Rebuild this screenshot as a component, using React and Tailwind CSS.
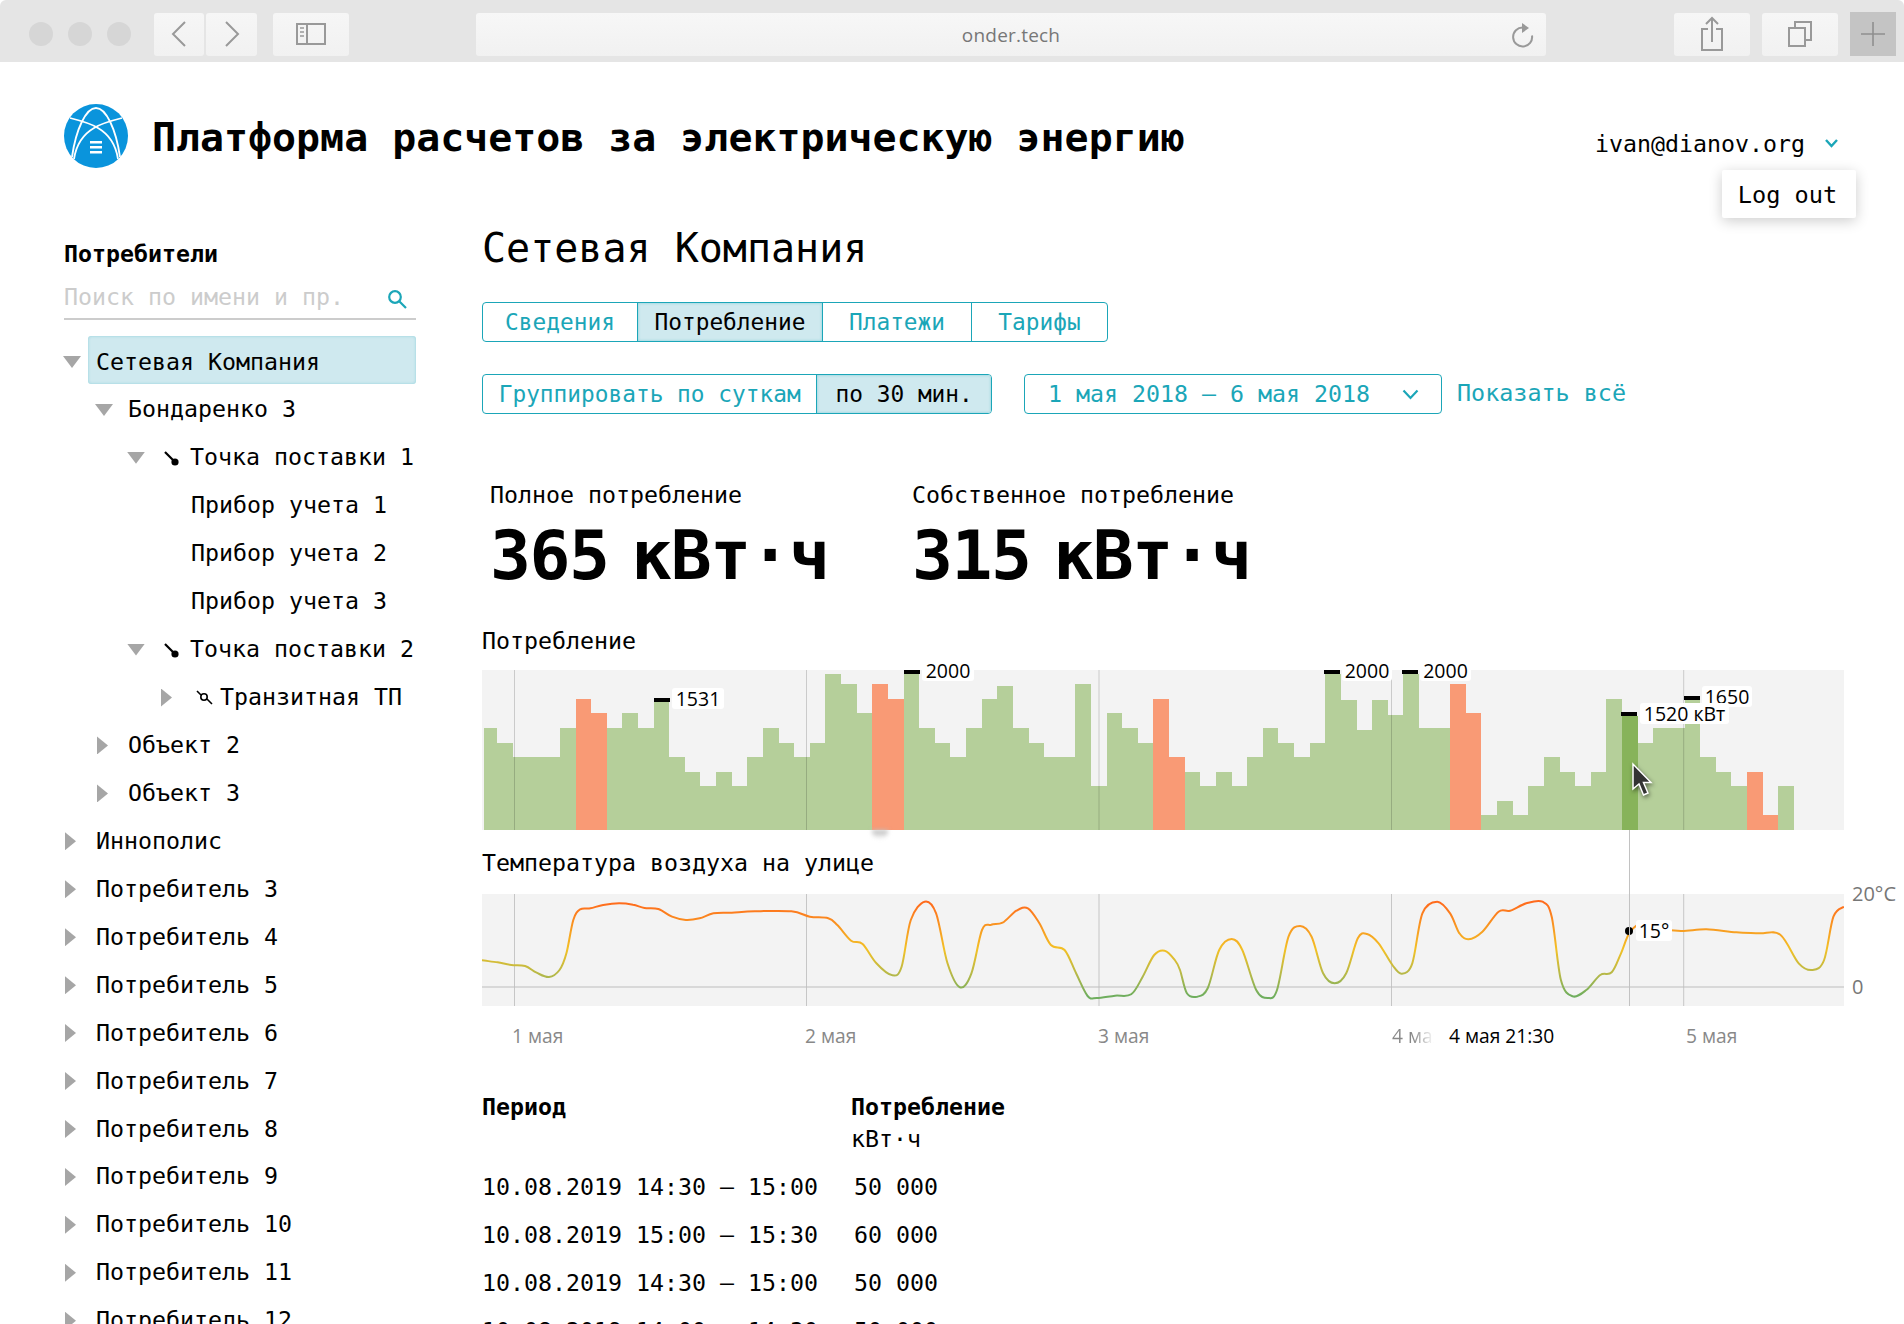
import React from 'react';

const BAR_TOPS = [
  234, 278, 321, 321, 321, 234, 147, 190, 234, 190, 234, 154, 321, 365, 408, 365, 408, 321, 234, 278, 321, 278,
  72, 103, 190, 103, 147, 72, 234, 278, 321, 234, 147, 108, 234, 278, 321, 321, 103, 408, 190, 234, 278, 147, 321,
  365, 408, 365, 408, 321, 234, 278, 321, 278, 72, 151, 239, 151, 195, 72, 234, 234, 103, 190, 495, 453, 495, 408,
  321, 365, 408, 365, 147, 197, 278, 234, 234, 150, 321, 365, 408, 365, 495, 408,
];
const ORANGE = [6, 7, 25, 26, 43, 44, 62, 63, 81, 82];
const SELECTED = 73;
const GRID_X = [32.5, 324.5, 617, 909.5, 1201.7];

const MARKERS = [
  { x: 172, y: 28, text: '1531', lx: 190, ly: 18, w: 52 },
  { x: 422, y: 0, text: '2000', lx: 440, ly: -10, w: 52 },
  { x: 842, y: 0, text: '2000', lx: 860, ly: -10, w: 50 },
  { x: 920, y: 0, text: '2000', lx: 938, ly: -10, w: 51 },
  { x: 1202, y: 26, text: '1650', lx: 1220, ly: 16, w: 50 },
  { x: 1139, y: 42, text: '1520 кВт', lx: 1158, ly: 33, w: 89 },
];

const A = [[26,331],[60,337],[90,345],[120,348],[145,368],[172,381],[195,360],[210,310],[225,210],[240,178],[262,175],[290,165],[325,160],[355,164],[380,174],[410,177],[440,200],[470,210],[500,205],[530,190],[570,188],[620,184],[700,184],[740,200],[780,205],[800,225],[830,272],[855,282],[885,340],[920,376],[940,350],[960,210],[990,155],[1015,190],[1040,340],[1067,412],[1092,370],[1115,240],[1135,224],[1160,218],[1190,182],[1215,175],[1240,220],[1265,285],[1295,300],[1320,370],[1345,438],[1365,444],[1405,437],[1440,433],[1465,380],[1490,315],[1513,302],[1535,330]];
const B = [[0,360],[15,430],[37,440],[60,415],[85,300],[112,267],[135,300],[165,420],[190,444],[210,420],[235,260],[260,228],[285,260],[310,370],[335,400],[360,370],[385,265],[405,252],[430,280],[460,345],[480,371],[503,340],[525,190],[557,155],[585,190],[605,250],[625,268],[655,245],[690,185],[715,182],[750,160],[785,155],[805,200],[825,390],[850,439],[880,420],[910,375],[935,367],[955,310],[975,245],[1005,218],[1040,235],[1085,243],[1140,238],[1205,247],[1255,250],[1300,254],[1340,340],[1370,360],[1395,330],[1415,200],[1438,170]];

// coordinates were read off the crops, so convert to chart px
const tempPoints = [
  ...A.map(([x, y]) => [470 + x / 2.1778 - 482, 850 + y / 3 - 894]),
  ...B.map(([x, y]) => [1180 + x / 2.1657 - 482, 850 + y / 3 - 894]),
];

function smooth(pts) {
  let d = `M${pts[0][0].toFixed(1)} ${pts[0][1].toFixed(1)}`;
  for (let i = 0; i < pts.length - 1; i++) {
    const p0 = pts[i - 1] || pts[i];
    const p1 = pts[i];
    const p2 = pts[i + 1];
    const p3 = pts[i + 2] || p2;
    const c1x = p1[0] + (p2[0] - p0[0]) / 6;
    const c1y = p1[1] + (p2[1] - p0[1]) / 6;
    const c2x = p2[0] - (p3[0] - p1[0]) / 6;
    const c2y = p2[1] - (p3[1] - p1[1]) / 6;
    d += `C${c1x.toFixed(1)} ${c1y.toFixed(1)} ${c2x.toFixed(1)} ${c2y.toFixed(1)} ${p2[0].toFixed(1)} ${p2[1].toFixed(1)}`;
  }
  return d;
}

const TREE = [
  { level: 0, open: true, text: 'Сетевая Компания', active: true },
  { level: 1, open: true, text: 'Бондаренко 3' },
  { level: 2, open: true, icon: 'point', text: 'Точка поставки 1' },
  { level: 3, text: 'Прибор учета 1' },
  { level: 3, text: 'Прибор учета 2' },
  { level: 3, text: 'Прибор учета 3' },
  { level: 2, open: true, icon: 'point', text: 'Точка поставки 2' },
  { level: 4, closed: true, icon: 'transit', text: 'Транзитная ТП' },
  { level: 1, closed: true, text: 'Объект 2' },
  { level: 1, closed: true, text: 'Объект 3' },
  { level: 0, closed: true, text: 'Иннополис' },
  ...[3, 4, 5, 6, 7, 8, 9, 10, 11, 12].map(n => ({ level: 0, closed: true, text: `Потребитель ${n}` })),
];

const ROWS = [
  ['10.08.2019 14:30 — 15:00', '50 000'],
  ['10.08.2019 15:00 — 15:30', '60 000'],
  ['10.08.2019 14:30 — 15:00', '50 000'],
  ['10.08.2019 14:00 — 14:30', '50 000'],
];

function ToolBtn({ className, children }) {
  return (
    <div className={`h-[43px] rounded-[3px] bg-gradient-to-b from-[#f6f6f6] to-[#f1f1f1] flex items-center justify-center ${className}`}>
      {children}
    </div>
  );
}

function BrowserBar() {
  return (
    <div className="h-[62px] pt-[6px] bg-[#e5e5e5] rounded-t-[6px] flex items-center relative font-['Open_Sans',sans-serif]">
      <div className="flex gap-[15px] ml-[29px] w-[125px]">
        <div className="w-6 h-6 rounded-full bg-[#d6d6d6]" />
        <div className="w-6 h-6 rounded-full bg-[#d6d6d6]" />
        <div className="w-6 h-6 rounded-full bg-[#d6d6d6]" />
      </div>
      <ToolBtn className="w-[50px]">
        <svg width="16" height="28" viewBox="0 0 16 28" fill="none" stroke="#999" strokeWidth="2"><path d="M14 2 2 14l12 12" /></svg>
      </ToolBtn>
      <ToolBtn className="w-[51px] ml-[2px]">
        <svg width="16" height="28" viewBox="0 0 16 28" fill="none" stroke="#999" strokeWidth="2"><path d="m2 2 12 12L2 26" /></svg>
      </ToolBtn>
      <ToolBtn className="w-[76px] ml-4">
        <svg width="30" height="22" viewBox="0 0 30 22" fill="none" stroke="#999" strokeWidth="2"><rect x="1" y="1" width="28" height="20" /><path d="M11 1v20" /><path d="M4 5h4M4 9h4M4 13h4" strokeWidth="1.6" /></svg>
      </ToolBtn>
      <div className="w-[1070px] h-[43px] ml-[127px] rounded-[3px] bg-gradient-to-b from-[#f7f7f7] to-[#f1f1f1] relative flex items-center justify-center">
        <span className="text-[19px] text-[#777] mt-[3px] tracking-[0.2px]">onder.tech</span>
        <svg className="absolute right-[12px] top-[9px]" width="24" height="26" viewBox="0 0 24 26" fill="none" stroke="#999" strokeWidth="2">
          <path d="M13 5.500a9.500 9.500 0 1 0 9 8" />
          <path d="m12 1 7 5-7 5z" fill="#999" stroke="none" />
        </svg>
      </div>
      <ToolBtn className="w-[76px] ml-[128px]">
        <svg width="22" height="36" viewBox="0 0 22 36" fill="none" stroke="#999" strokeWidth="2"><path d="M7 13H1v21h20V13h-6" /><path d="M11 26V2M5 8l6-6 6 6" /></svg>
      </ToolBtn>
      <ToolBtn className="w-[76px] ml-3">
        <svg width="24" height="28" viewBox="0 0 24 28" fill="none" stroke="#999" strokeWidth="2"><rect x="1" y="8" width="16" height="18" /><path d="M7 8V2h16v18h-6" /></svg>
      </ToolBtn>
      <div className="w-[46px] h-[44px] ml-3 bg-[#c4c4c4] flex items-center justify-center">
        <svg width="24" height="24" viewBox="0 0 24 24" stroke="#8f8f8f" strokeWidth="1.6"><path d="M0 12h24M12 0v24" /></svg>
      </div>
    </div>
  );
}

function Logo() {
  return (
    <svg width="64" height="64" viewBox="0 0 64 64" fill="none" className="shrink-0">
      <circle cx="32" cy="32" r="32" fill="#0a94dc" />
      <g stroke="#fff" strokeWidth="1.8">
        <path d="M8 53C12 25 22 4 32 4s20 21 24 49" />
        <path d="M6 14c12 3 22 6 28 10 12 7 18 18 20 31" />
        <path d="M58 14c-12 3-22 6-28 10-12 7-18 18-20 31" />
      </g>
      <path d="M26 37h12v2.600H26zM26 42h12v2.600H26zM26 47h12v2.600H26z" fill="#fff" />
    </svg>
  );
}

function Header() {
  return (
    <div className="h-[162px] pl-16 pr-[66px] pt-[42px] flex items-start relative">
      <Logo />
      <h1 className="ml-6 text-[39.9px] font-bold leading-[60px] mt-[3px] text-black whitespace-nowrap">
        Платформа расчетов за электрическую энергию
      </h1>
      <div className="ml-auto mt-[24px] flex items-center">
        <span className="leading-8">ivan@dianov.org</span>
        <svg className="ml-5 mt-[-1px]" width="13" height="9" viewBox="0 0 13 9" fill="none" stroke="#1ba6b8" strokeWidth="2.4"><path d="m1 1 5.500 6L12 1" /></svg>
      </div>
      <div className="absolute left-[1722px] top-[108px] w-[134px] h-[48px] pt-[3px] pr-[3px] bg-white rounded-[2px] shadow-[0_3px_14px_rgba(0,0,0,0.2)] flex items-center justify-center text-[23.6px]">
        Log out
      </div>
    </div>
  );
}

function TreeIcon({ type }) {
  if (type === 'point') {
    return (
      <svg width="18" height="18" viewBox="0 0 18 18" className="shrink-0" stroke="#000" strokeWidth="2.2">
        <path d="M2 3 11 12" />
        <circle cx="12" cy="13" r="3.600" fill="#000" stroke="none" />
      </svg>
    );
  }
  return (
    <svg width="18" height="18" viewBox="0 0 18 18" className="shrink-0" fill="none" stroke="#000" strokeWidth="1.6">
      <path d="M1 2 5 6M11 10l5 5" />
      <circle cx="8" cy="8" r="3.200" />
    </svg>
  );
}

function TreeRow({ item }) {
  const indent = ['w-0', 'w-8', 'w-16', 'w-[127px]', 'w-[96px]'][item.level];
  return (
    <div className="h-[47.95px] flex items-center whitespace-nowrap shrink-0">
      <div className={`shrink-0 ${indent}`} />
      {item.level < 3 && (
        <div className="w-8 shrink-0 flex items-center">
          {item.open && <div className="w-[18px] h-[12px] bg-[#a6a6a6] [clip-path:polygon(0_0,100%_0,50%_100%)] -ml-[1px]" />}
          {item.closed && <div className="w-[11px] h-[18px] bg-[#a6a6a6] [clip-path:polygon(0_0,100%_50%,0_100%)] ml-[1px]" />}
        </div>
      )}
      {item.level === 4 && (
        <div className="w-[62px] shrink-0 flex items-center pl-[1px]">
          <div className="w-[11px] h-[18px] bg-[#a6a6a6] [clip-path:polygon(0_0,100%_50%,0_100%)]" />
          <div className="ml-[24px]"><TreeIcon type="transit" /></div>
        </div>
      )}
      {item.icon === 'point' && <div className="ml-[3px] mr-[9px]"><TreeIcon type="point" /></div>}
      {item.active ? (
        <div className="w-[328px] h-[48px] -ml-2 -mt-[4px] pl-2 pt-[4px] flex items-center bg-[#cfe9ef] rounded-[3px] shadow-[inset_0_0_3px_rgba(27,166,184,0.35)]">{item.text}</div>
      ) : (
        <span className={item.icon === 'transit' ? '-ml-[2px]' : ''}>{item.text}</span>
      )}
    </div>
  );
}

function Sidebar() {
  return (
    <div className="w-[352px] shrink-0 pt-[6px]">
      <div className="h-12 flex items-center font-bold">Потребители</div>
      <div className="h-[42px] pb-[2px] border-b-2 border-[#cccccc] flex items-center justify-between">
        <span className="text-[#cccccc]">Поиск по имени и пр.</span>
        <svg className="mr-[9px] mt-[3px]" width="20" height="20" viewBox="0 0 20 20" fill="none" stroke="#1ba6b8" strokeWidth="2.2"><circle cx="8" cy="8" r="5.800" /><path d="m12.500 12.500 6.500 6.500" /></svg>
      </div>
      <div className="mt-[18px] flex flex-col">
        {TREE.map((item, i) => <TreeRow key={i} item={item} />)}
      </div>
    </div>
  );
}

function Segment({ items, active, className }) {
  return (
    <div className={`h-10 flex border border-[#1ba6b8] rounded-[4px] overflow-hidden text-[22.8px] ${className}`}>
      {items.map(([label, cls], i) => (
        <div key={i} className={`flex items-center justify-center whitespace-nowrap ${cls} ${i ? 'border-l border-[#1ba6b8]' : ''} ${i === active ? 'bg-[#cfe9ef] text-black shadow-[inset_0_0_3px_rgba(27,166,184,0.4)]' : 'text-[#1ba6b8]'}`}>
          {label}
        </div>
      ))}
    </div>
  );
}

function Toolbar() {
  return (
    <>
      <Segment
        className="mt-[30px] w-[626px]"
        active={1}
        items={[['Сведения', 'w-[154px]'], ['Потребление', 'w-[185px]'], ['Платежи', 'w-[149px]'], ['Тарифы', 'w-[136px]']]}
      />
      <div className="mt-8 flex items-center">
        <Segment
          className="w-[510px]"
          active={1}
          items={[['Группировать по суткам', 'w-[334px]'], ['по 30 мин.', 'w-[175px]']]}
        />
        <div className="ml-8 w-[418px] h-10 border border-[#1ba6b8] rounded-[4px] text-[#1ba6b8] flex items-center pl-[23px] pr-[22px] justify-between whitespace-nowrap">
          <span>1 мая 2018 — 6 мая 2018</span>
          <svg width="17" height="11" viewBox="0 0 17 11" fill="none" stroke="#1ba6b8" strokeWidth="2.2"><path d="m1.500 1.500 7 7.500 7-7.500" /></svg>
        </div>
        <span className="ml-[15px] text-[#1ba6b8] text-[23.4px]">Показать всё</span>
      </div>
    </>
  );
}

function Stats() {
  return (
    <div className="mt-[64px] flex">
      <div className="w-[430px] pl-2">
        <div className="h-[34px] leading-[34px]">Полное потребление</div>
        <div className="h-[80px] leading-[80px] mt-1 text-[68px] font-bold tracking-[-1.4px] [word-spacing:-17px] whitespace-nowrap">365 кВт·ч</div>
      </div>
      <div>
        <div className="h-[34px] leading-[34px]">Собственное потребление</div>
        <div className="h-[80px] leading-[80px] mt-1 text-[68px] font-bold tracking-[-1.4px] [word-spacing:-17px] whitespace-nowrap">315 кВт·ч</div>
      </div>
    </div>
  );
}

function ChartLabel({ left, top, width, height, children }) {
  return (
    <div
      className="absolute bg-white rounded-[3px] flex items-center justify-center font-['Open_Sans',sans-serif] text-[19.5px] text-black whitespace-nowrap"
      style={{ left, top, width, height }}
    >
      {children}
    </div>
  );
}

function ConsumptionChart() {
  return (
    <div className="relative w-[1362px] h-[160px] bg-[#f3f3f3]">
      <svg width="1362" height="160" viewBox="0 0 1362 160" className="absolute inset-0">
        {BAR_TOPS.map((top, i) => {
          const y = (top - 60) / 3;
          const fill = ORANGE.includes(i) ? '#f99a75' : i === SELECTED ? '#87b35a' : '#b5cf9a';
          const x = i === 0 ? 1.8 : -0.2 + i * 15.62;
          const w = i === 0 ? 13.6 : 15.62;
          return <rect key={i} x={x} y={y} width={w} height={160 - y} fill={fill} shapeRendering="crispEdges" />;
        })}
        {GRID_X.map(x => <rect key={x} x={x - 0.5} y="0" width="1" height="160" fill="#000" opacity="0.17" />)}
      </svg>
      {MARKERS.map((m, i) => (
        <React.Fragment key={i}>
          <ChartLabel left={m.lx} top={m.ly} width={m.w} height={21}>{m.text}</ChartLabel>
          <div className="absolute w-4 h-1 bg-black" style={{ left: m.x, top: m.y }} />
        </React.Fragment>
      ))}
      <div className="absolute left-[390px] top-[160px] w-4 h-[9px] rounded-b-full blur-[2px] bg-gradient-to-b from-[#b5b5b5] to-white" />
      <svg className="absolute left-[1148px] top-[91px] drop-shadow-[1px_2px_2px_rgba(0,0,0,0.5)]" width="26" height="38" viewBox="0 0 26 38">
        <path d="M3 3v25l6-5 4.500 11 4.500-2-4.500-10.500H21z" fill="#333" stroke="#fff" strokeWidth="1.500" />
      </svg>
    </div>
  );
}

function TemperatureChart() {
  const d = smooth(tempPoints);
  return (
    <div className="relative w-[1362px] h-[112px] bg-[#f3f3f3]">
      <svg width="1362" height="112" viewBox="0 0 1362 112" className="absolute inset-0">
        <defs>
          <linearGradient id="temp" gradientUnits="userSpaceOnUse" x1="0" y1="8" x2="0" y2="102">
            <stop offset="0" stopColor="#ff6a1c" />
            <stop offset="0.5" stopColor="#f3c025" />
            <stop offset="0.78" stopColor="#b3b84a" />
            <stop offset="1" stopColor="#6fae5e" />
          </linearGradient>
        </defs>
        {GRID_X.map(x => <rect key={x} x={x - 0.5} y="0" width="1" height="112" fill="#c6c6c6" />)}
        <rect x="0" y="92.500" width="1362" height="1" fill="#bdbdbd" />
        <path d={d} fill="none" stroke="url(#temp)" strokeWidth="2" />
      </svg>
      <ChartLabel left={1154} top={26} width={36} height={21}>15°</ChartLabel>
      <div className="absolute left-[1143px] top-[33px] w-[8px] h-[8px] rounded-full bg-black" />
    </div>
  );
}

function Charts() {
  return (
    <div className="relative">
      <div className="mt-[29px] h-[45px] leading-[32px]">Потребление</div>
      <ConsumptionChart />
      <div className="h-[64px] pt-[17px] leading-[32px]">Температура воздуха на улице</div>
      <TemperatureChart />
      <div className="absolute left-[1147px] top-[205px] w-[1px] h-[176px] bg-[#c2c2c2]" />
      <div className="absolute left-[1370px] top-[257px] text-[20px] font-['Open_Sans',sans-serif] text-[#777] leading-6">20°C</div>
      <div className="absolute left-[1370px] top-[350px] text-[20px] font-['Open_Sans',sans-serif] text-[#777] leading-6">0</div>
      <div className="h-[60px] w-[1362px] flex items-center font-['Open_Sans',sans-serif] text-[19.2px] text-[#888] relative">
        <span className="ml-[30px] w-[293px]">1 мая</span>
        <span className="w-[293px]">2 мая</span>
        <span className="w-[294px]">3 мая</span>
        <span className="w-[42px] overflow-hidden whitespace-nowrap bg-gradient-to-r from-[#888] from-50% to-white bg-clip-text text-transparent">4 мая</span>
        <span className="ml-[15px] text-black whitespace-nowrap w-[237px]">4 мая 21:30</span>
        <span>5 мая</span>
      </div>
    </div>
  );
}

function DataTable() {
  return (
    <div className="mt-[25px]">
      <div className="flex">
        <div className="w-[369px] font-bold h-8 leading-8">Период</div>
        <div>
          <div className="font-bold h-8 leading-8">Потребление</div>
          <div className="h-8 leading-8">кВт·ч</div>
        </div>
      </div>
      <div className="mt-[8px] flex flex-col">
        {ROWS.map(([period, value], i) => (
          <div key={i} className="flex h-12 items-center whitespace-nowrap">
            <div className="w-[372px]">{period}</div>
            <div>{value}</div>
          </div>
        ))}
      </div>
    </div>
  );
}

export default function App() {
  return (
    <div className="w-[1904px] h-[1324px] overflow-hidden bg-white text-black text-[23.25px] font-['DejaVu_Sans_Mono','Liberation_Mono',monospace] relative">
      <BrowserBar />
      <Header />
      <div className="flex pl-16">
        <Sidebar />
        <div className="ml-[66px] flex-1 min-w-0">
          <h2 className="text-[40px] leading-[48px] h-12 whitespace-nowrap">Сетевая Компания</h2>
          <Toolbar />
          <Stats />
          <Charts />
          <DataTable />
        </div>
      </div>
    </div>
  );
}
